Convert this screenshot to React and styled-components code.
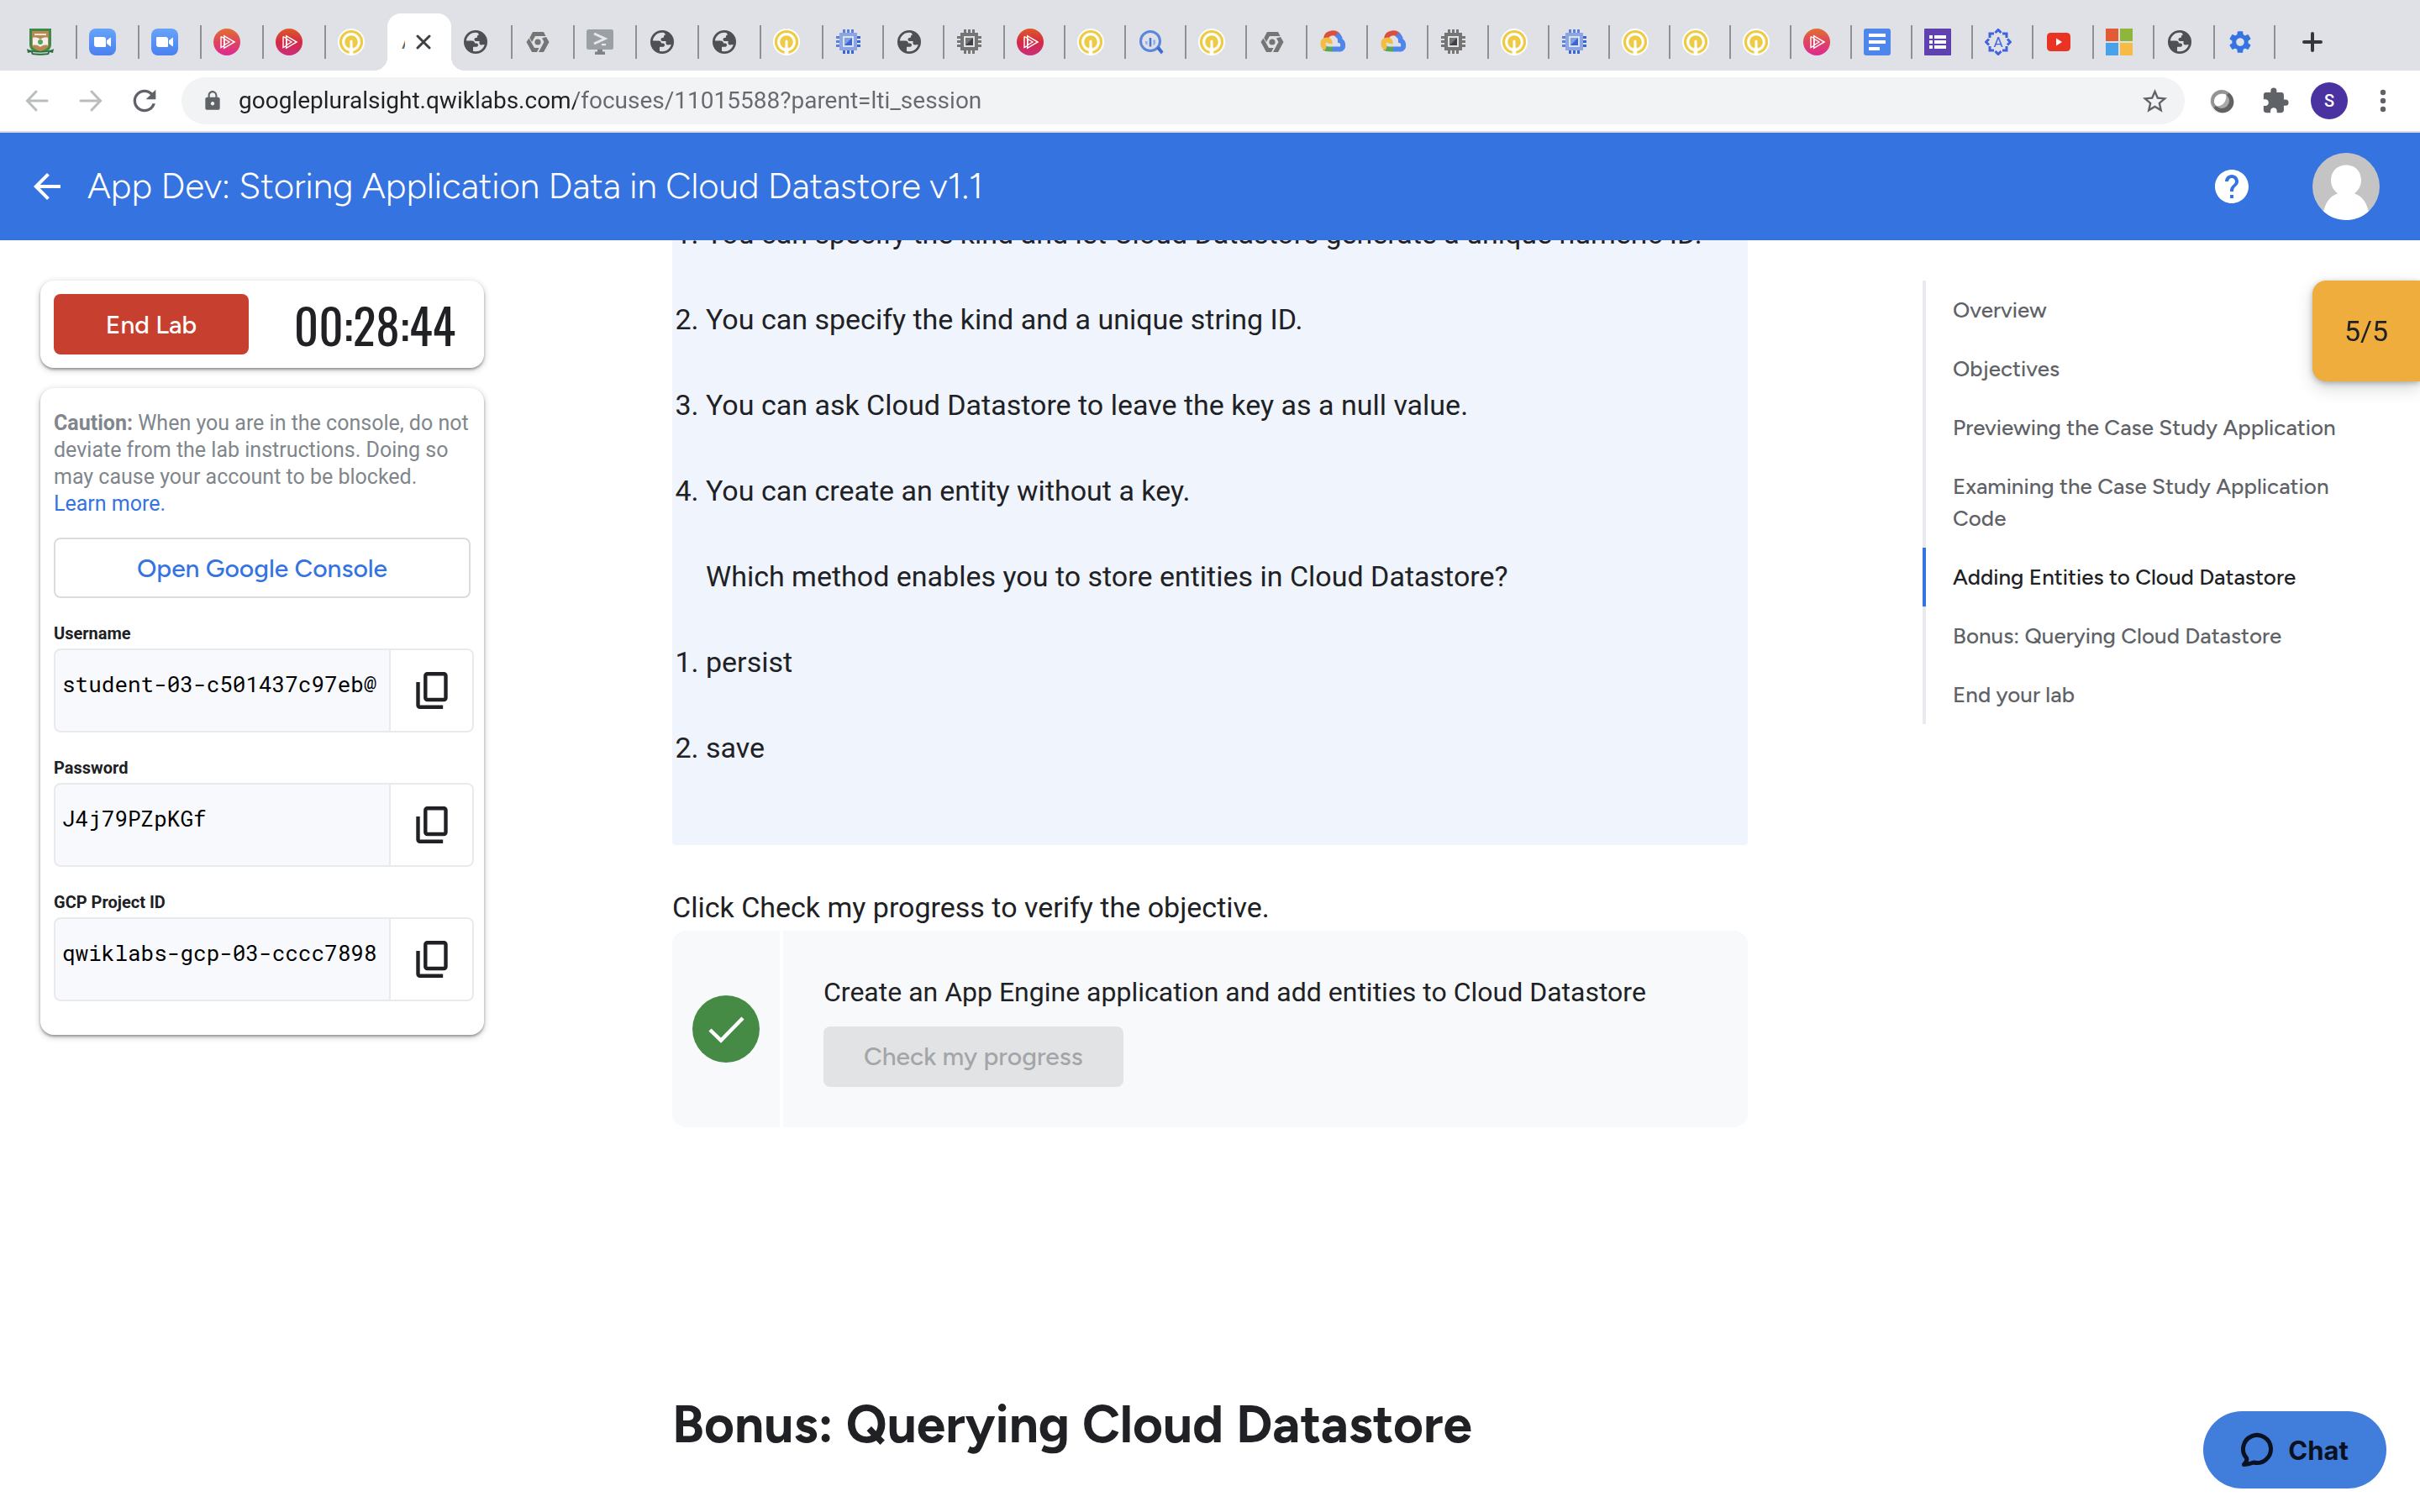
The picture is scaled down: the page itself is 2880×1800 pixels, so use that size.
import React from 'react';
import styled, { createGlobalStyle, css } from 'styled-components';
import {
  MdArrowBack,
  MdExtension,
  MdHelp,
  MdLock,
  MdRefresh,
  MdSettings,
  MdStarBorder,
} from 'react-icons/md';

const fonts = {
  body: 'Roboto, "Open Sans", sans-serif',
  display: 'Figtree, Roboto, sans-serif',
  mono: '"Roboto Mono", "DejaVu Sans Mono", monospace',
  timer: 'Oswald, "Roboto Condensed", Roboto, sans-serif',
  chat: 'Inter, Roboto, sans-serif',
};

const colors = {
  ink: '#202124',
  grey: '#5f6368',
  line: '#e8eaed',
  blue: '#3574e0',
  strip: '#dfe1e6',
};

const GlobalStyle = createGlobalStyle`
  *, *::before, *::after { box-sizing: border-box; }
  body {
    margin: 0;
    background: #fff;
    color: ${colors.ink};
    font-family: ${fonts.body};
  }
  button, input { font: inherit; color: inherit; }
  button { border: 0; padding: 0; background: none; cursor: pointer; }
  svg { display: block; flex: none; }
`;

/* ---------- Favicons ---------- */

const Icon32 = ({ children }) => (
  <svg width="32" height="32" viewBox="0 0 32 32" aria-hidden="true">
    {children}
  </svg>
);

const CrestIcon = () => (
  <Icon32>
    <path d="M3 0h26v19c0 6-5 9-13 12C8 28 3 25 3 19z" fill="#3d8a4c" />
    <path d="M6 3h20v16c0 4-4 6-10 8-6-2-10-4-10-8z" fill="#b98a50" />
    <path d="M9 6h14v2H9z" fill="#efe3cf" />
    <path d="M7 11c4-1 7 0 9 2 2-2 5-3 9-2v9c-4-1-7 0-9 2-2-2-5-3-9-2z" fill="#f6f1ee" />
    <circle cx="16" cy="16" r="3" fill="#4fa862" />
    <path d="M0 24c5 4 27 4 32 0l-1 5-4-1-1 3c-6 1-14 1-20 0l-1-3-4 1z" fill="#2c6b3c" />
    <path d="M7 28.500c6 1 12 1 18 0" stroke="#b9d3b9" strokeWidth="1.500" fill="none" />
  </Icon32>
);

const ZoomIcon = () => (
  <Icon32>
    <defs>
      <linearGradient id="zoomFill" x1="0" y1="0" x2="0" y2="1">
        <stop offset="0" stopColor="#66a3f8" />
        <stop offset="1" stopColor="#4a80f0" />
      </linearGradient>
    </defs>
    <rect width="32" height="32" rx="8" fill="url(#zoomFill)" />
    <path d="M6 11.500c0-1 .5-1.500 1.500-1.500H17c2 0 3 1 3 3v7.500c0 1-.5 1.500-1.500 1.500H9c-2 0-3-1-3-3z" fill="#fff" />
    <path d="M21 14.200l4-3.200c.6-.5 1-.3 1 .4v9.200c0 .7-.4.900-1 .4l-4-3.200z" fill="#fff" />
  </Icon32>
);

const PluralsightIcon = ({ deep }) => (
  <Icon32>
    <defs>
      <linearGradient id={deep ? 'psDeep' : 'psWarm'} x1="0" y1="0" x2="0" y2="1">
        <stop offset="0" stopColor={deep ? '#dd5a26' : '#e2702f'} />
        <stop offset=".5" stopColor={deep ? '#d42a46' : '#de4460'} />
        <stop offset="1" stopColor={deep ? '#ca2e7c' : '#dc2a94'} />
      </linearGradient>
    </defs>
    <circle cx="16" cy="16" r="16" fill={`url(#${deep ? 'psDeep' : 'psWarm'})`} />
    <path d="M9 9.500v13l4-2.200M9 9.500l4 2.200" fill="none" stroke="#fff" strokeWidth="1.400" />
    <path d="M12.700 8.700v14.600L25 16z" fill="none" stroke="#fff" strokeWidth="1.500" />
    <path d="M13 12.500v7l6-3.500z" fill="none" stroke="#fff" strokeWidth="1.300" />
  </Icon32>
);

const QwiklabsIcon = () => (
  <Icon32>
    <circle cx="16" cy="16" r="16" fill="#fff" />
    <circle cx="16" cy="16" r="12.500" fill="none" stroke="#efcb45" strokeWidth="3.200" />
    <circle cx="16" cy="16" r="7.800" fill="#efcb45" />
    <path d="M16 15v16" stroke="#fff" strokeWidth="3" strokeLinecap="round" />
    <path d="M14.200 22.500v8M17.800 22.500v8" stroke="#fff" strokeWidth="1.200" />
  </Icon32>
);

const GlobeIcon = () => (
  <Icon32>
    <g fill="#4e5054">
      <circle cx="16" cy="16" r="12.600" fill="none" stroke="#4e5054" strokeWidth="2.800" />
      <path d="M17 2.500C24 3 29 8 29.500 15l-2 4-5 .5c-1.500 0-2-1-2-2.200V15h-4c-1.200 0-2-.8-2-2 0-1.500 1-2 2.200-2 1 0 1.300-.6 1.300-1.500 0-1.300.9-1.700 2-1.900z" />
      <path d="M2.500 14.500h9c2.500 0 3.500 1.500 3.500 3h2c1.500 0 2 1 2 2 0 1.600-1 2.300-2.500 2.300H14c-.8 0-1 .5-1 1.200V27l-2 1C6 26 2.500 21 2.500 16z" />
    </g>
  </Icon32>
);

const HexIcon = () => (
  <Icon32>
    <g fill="#757575">
      <path d="M10 4h13l2.500 5H13l-4 7-2.700-5z" />
      <path d="M26 10l3.500 6-6.500 12h-6l6.500-12-2.500-4.500z" />
      <path d="M5.500 11.500L2.500 16 9 28h6l2.500-5H12z" />
      <circle cx="16" cy="16" r="3.600" />
    </g>
  </Icon32>
);

const ShellIcon = () => (
  <Icon32>
    <rect y="1" width="32" height="24" rx="2.500" fill="#9aa0a6" />
    <path d="M9 6l13 6-13 6" fill="none" stroke="#e6e8ec" strokeWidth="3" />
    <path d="M18 18h5v2.200h-5z" fill="#e6e8ec" />
    <path d="M13 25h6v2.500h3V31H10v-3.500h3z" fill="#7f8388" />
  </Icon32>
);

const ChipIcon = ({ grey }) => {
  const frame = grey ? '#757575' : '#8ba6e6';
  const pin = grey ? '#757575' : '#5a82dc';
  const corner = grey ? '#757575' : '#3b66cf';
  return (
    <Icon32>
      <path d="M9 1h3v4H9zM14 1h3v4h-3zM19 1h3v4h-3zM1 9h4v3H1zM1 14h4v3H1zM1 19h4v3H1z" fill={pin} />
      <path d="M9 26h3v4H9zM14 26h3v4h-3zM19 26h3v4h-3zM26 9h4v3h-4zM26 14h4v3h-4zM26 19h4v3h-4z" fill={corner} />
      <path fillRule="evenodd" d="M5 5h21v21H5zM9 9v13h13V9z" fill={frame} />
      <path d="M11 11h9v9h-9z" fill={grey ? '#757575' : '#7f9fe6'} />
      <path d="M20 11v9h-9z" fill={grey ? '#3f4043' : '#3b66cf'} />
    </Icon32>
  );
};

const BigQueryIcon = () => (
  <Icon32>
    <circle cx="15" cy="15" r="11.500" fill="none" stroke="#5c86dc" strokeWidth="3" />
    <path d="M22.500 24l3-3 5 6.500-2.500 3z" fill="#3f6bd0" />
    <path d="M9 15h2.500v5L9 18zM18.500 13.500H21V18l-2.500 2.500z" fill="#8fadea" />
    <path d="M13.700 11h2.600v10.500h-2.600z" fill="#4c78d8" />
  </Icon32>
);

const CloudIcon = () => (
  <Icon32>
    <g fill="none" strokeWidth="6">
      <path d="M8 12C9 3.500 20 4 23 9" stroke="#d9503f" />
      <path d="M20.500 7C24 9 25 12 25 14.500c4.500 1.500 4 10 0 10H16" stroke="#4f86ec" />
      <path d="M6 23.200c2 1.500 4 1.300 10 1.300" stroke="#57a55a" />
      <path d="M8 23c-5-2-4.500-9 .5-9.500C12 13 13 15.500 12.500 18" stroke="#f4bc42" />
    </g>
  </Icon32>
);

const DocsIcon = () => (
  <Icon32>
    <rect width="32" height="32" rx="3" fill="#4e86ec" />
    <path d="M6 6h20v4H6zM6 14h20v4H6zM6 22h13v4H6z" fill="#fff" />
  </Icon32>
);

const FormsIcon = () => (
  <Icon32>
    <rect width="32" height="32" rx="1" fill="#5f41b0" />
    <path d="M6 8h4v4H6zM12 8h14v4H12zM6 14h4v4H6zM12 14h14v4H12zM6 20h4v4H6zM12 20h14v4H12z" fill="#fff" />
  </Icon32>
);

const SvgLetter = styled.text`
  font: 400 17px ${fonts.body};
  text-anchor: middle;
`;

const BadgeIcon = () => (
  <Icon32>
    <g fill="none" stroke="#3f63e0" strokeWidth="3">
      <path d="M12.500 5L16 1.500 19.500 5M12.500 27l3.500 3.500 3.500-3.500M5 12.500L1.500 16 5 19.500M27 12.500l3.500 3.500-3.500 3.500" />
      <path d="M6 11V6h5M21 6h5v5M26 21v5h-5M11 26H6v-5" />
    </g>
    <SvgLetter x="16" y="22" fill="#3f63e0">A</SvgLetter>
  </Icon32>
);

const YouTubeIcon = () => (
  <Icon32>
    <rect x="2" y="5" width="28" height="22" rx="4.500" fill="#ea3323" />
    <path d="M13 11.500v9l7-4.500z" fill="#fff" />
  </Icon32>
);

const MicrosoftIcon = () => (
  <Icon32>
    <path d="M0 0h15v15H0z" fill="#e35b35" />
    <path d="M17 0h15v15H17z" fill="#8db63a" />
    <path d="M0 17h15v15H0z" fill="#48a2ea" />
    <path d="M17 17h15v15H17z" fill="#f5bb42" />
  </Icon32>
);

const favicons = {
  crest: <CrestIcon />,
  zoom: <ZoomIcon />,
  pluralsight: <PluralsightIcon />,
  pluralsightDeep: <PluralsightIcon deep />,
  qwiklabs: <QwiklabsIcon />,
  globe: <GlobeIcon />,
  hex: <HexIcon />,
  shell: <ShellIcon />,
  chip: <ChipIcon />,
  chipGrey: <ChipIcon grey />,
  bigquery: <BigQueryIcon />,
  cloud: <CloudIcon />,
  docs: <DocsIcon />,
  forms: <FormsIcon />,
  badge: <BadgeIcon />,
  youtube: <YouTubeIcon />,
  microsoft: <MicrosoftIcon />,
  settings: <MdSettings size={32} color={colors.blue} />,
};

const wideTabs = [
  'crest', 'zoom', 'zoom', 'pluralsight', 'pluralsightDeep', 'qwiklabs', 'active',
  'globe', 'hex', 'shell', 'globe', 'globe', 'qwiklabs',
];

const narrowTabs = [
  'chip', 'globe', 'chipGrey', 'pluralsightDeep', 'qwiklabs', 'bigquery', 'qwiklabs', 'hex',
  'cloud', 'cloud', 'chipGrey', 'qwiklabs', 'chip', 'qwiklabs', 'qwiklabs', 'qwiklabs',
  'pluralsight', 'docs', 'forms', 'badge', 'youtube', 'microsoft', 'globe', 'settings',
];

/* ---------- Browser chrome ---------- */

const TabStrip = styled.div`
  display: flex;
  height: 84px;
  padding: 16px 18px 0;
  background: ${colors.strip};
`;

const Tab = styled.button`
  display: flex;
  flex: none;
  align-items: center;
  justify-content: space-between;
  width: ${(p) => (p.$wide ? 74 : 72)}px;
  padding-left: 14px;
`;

const TabDivider = styled.span`
  width: 2px;
  height: 40px;
  background: #8f9094;
`;

const foot = css`
  content: '';
  position: absolute;
  bottom: 0;
  width: 16px;
  height: 16px;
`;

const ActiveTab = styled.div`
  position: relative;
  display: flex;
  flex: none;
  align-items: center;
  gap: 10px;
  width: 76px;
  margin: 0 -1px;
  padding-left: 17px;
  border-radius: 16px 16px 0 0;
  background: #fff;

  &::before {
    ${foot}
    right: 100%;
    background: radial-gradient(circle at 0 0, transparent 16px, #fff 16px);
  }

  &::after {
    ${foot}
    left: 100%;
    background: radial-gradient(circle at 100% 0, transparent 16px, #fff 16px);
  }
`;

const TabTitle = styled.span`
  width: 4px;
  overflow: hidden;
  font-size: 24px;
  line-height: 32px;
  color: ${colors.grey};
`;

const CloseButton = styled.button`
  display: grid;
  place-items: center;
  width: 24px;
  height: 24px;
`;

const NewTabButton = styled.button`
  display: grid;
  place-items: center;
  width: 48px;
  margin-left: 20px;
`;

const Toolbar = styled.div`
  display: flex;
  align-items: center;
  gap: 24px;
  height: 74px;
  padding: 0 24px;
  border-bottom: 2px solid #d9dbdf;
  background: #fff;
`;

const ToolButton = styled.button`
  display: grid;
  flex: none;
  place-items: center;
  width: 40px;
  height: 40px;
  color: ${(p) => (p.disabled ? '#babcbe' : colors.grey)};
`;

const Omnibox = styled.div`
  display: flex;
  flex: 1;
  align-items: center;
  gap: 18px;
  height: 56px;
  padding: 0 16px 0 24px;
  border-radius: 28px;
  background: #f1f3f4;
  color: ${colors.grey};
`;

const AddressInput = styled.input`
  flex: 1;
  min-width: 0;
  padding: 0;
  border: 0;
  outline: 0;
  background: linear-gradient(90deg, ${colors.ink} 401px, #66696d 401px);
  background-clip: text;
  -webkit-text-fill-color: transparent;
  font-size: 28px;
  line-height: 40px;
`;

const ProfileBadge = styled.button`
  display: grid;
  flex: none;
  place-items: center;
  width: 44px;
  height: 44px;
  margin: 0 -2px;
  border-radius: 50%;
  background: #4a33a0;
  color: #fff;
  font-size: 20px;
  font-weight: 500;
`;

const BrowserChrome = () => (
  <>
    <TabStrip>
      {wideTabs.map((name, i) =>
        name === 'active' ? (
          <ActiveTab key={i}>
            <TabTitle>A</TabTitle>
            <CloseButton aria-label="Close tab">
              <svg width="18" height="18" viewBox="0 0 18 18" stroke="#3c4043" strokeWidth="3" strokeLinecap="round">
                <path d="M2 2l14 14M16 2L2 16" />
              </svg>
            </CloseButton>
          </ActiveTab>
        ) : (
          <Tab key={i} $wide aria-label={name}>
            {favicons[name]}
            {wideTabs[i + 1] !== 'active' && <TabDivider />}
          </Tab>
        ),
      )}
      {narrowTabs.map((name, i) => (
        <Tab key={i} aria-label={name}>
          {favicons[name]}
          <TabDivider />
        </Tab>
      ))}
      <NewTabButton aria-label="New tab">
        <svg width="24" height="24" viewBox="0 0 24 24" stroke="#35373a" strokeWidth="4" strokeLinecap="round">
          <path d="M12 2v20M2 12h20" />
        </svg>
      </NewTabButton>
    </TabStrip>
    <Toolbar>
      <ToolButton disabled aria-label="Back">
        <svg width="28" height="28" viewBox="0 0 28 28" fill="none" stroke="currentColor" strokeWidth="3" strokeLinecap="round">
          <path d="M26 14H3M13 3L2.500 14 13 25" />
        </svg>
      </ToolButton>
      <ToolButton disabled aria-label="Forward">
        <svg width="28" height="28" viewBox="0 0 28 28" fill="none" stroke="currentColor" strokeWidth="3" strokeLinecap="round">
          <path d="M2 14h23M15 3l10.500 11L15 25" />
        </svg>
      </ToolButton>
      <ToolButton aria-label="Reload">
        <MdRefresh size={40} />
      </ToolButton>
      <Omnibox>
        <MdLock size={26} />
        <AddressInput
          aria-label="Address"
          readOnly
          value="googlepluralsight.qwiklabs.com/focuses/11015588?parent=lti_session"
        />
        <ToolButton aria-label="Bookmark">
          <MdStarBorder size={35} />
        </ToolButton>
      </Omnibox>
      <ToolButton aria-label="Extension">
        <svg width="32" height="32" viewBox="0 0 32 32">
          <circle cx="16" cy="17" r="14" fill="#ececec" />
          <circle cx="16" cy="16" r="13" fill="#949494" />
          <path d="M24.500 6.500A13 13 0 1 1 6.500 24.500z" fill="#626262" />
          <circle cx="16" cy="16" r="9" fill="#a9a9a9" />
          <path d="M7 18C6 11 13 6 21 8.500 23 16 16 24 9.500 22A9 9 0 0 1 7 18z" fill="#fff" />
        </svg>
      </ToolButton>
      <ToolButton aria-label="Extensions">
        <MdExtension size={34} />
      </ToolButton>
      <ProfileBadge>S</ProfileBadge>
      <ToolButton aria-label="Menu">
        <svg width="8" height="28" viewBox="0 0 8 28" fill="currentColor">
          <circle cx="4" cy="4" r="3.200" />
          <circle cx="4" cy="14" r="3.200" />
          <circle cx="4" cy="24" r="3.200" />
        </svg>
      </ToolButton>
    </Toolbar>
  </>
);

/* ---------- Lab header ---------- */

const Header = styled.header`
  display: flex;
  align-items: center;
  gap: 24px;
  height: 128px;
  padding: 0 48px 0 32px;
  background: ${colors.blue};
  color: #fff;
`;

const HeaderTitle = styled.h1`
  flex: 1;
  margin: 0;
  font-family: ${fonts.display};
  font-size: 42px;
  font-weight: 350;
  line-height: 56px;
`;

const HeaderActions = styled.div`
  display: flex;
  align-items: center;
  gap: 72px;
`;

const LabHeader = () => (
  <Header>
    <button aria-label="Back to labs">
      <MdArrowBack size={48} />
    </button>
    <HeaderTitle>App Dev: Storing Application Data in Cloud Datastore v1.1</HeaderTitle>
    <HeaderActions>
      <button aria-label="Help">
        <MdHelp size={48} />
      </button>
      <button aria-label="Account">
        <svg width="80" height="80" viewBox="0 0 80 80">
          <defs>
            <clipPath id="avatarClip">
              <circle cx="40" cy="40" r="40" />
            </clipPath>
          </defs>
          <g clipPath="url(#avatarClip)">
            <path d="M0 0h80v80H0z" fill="#c4c4c4" />
            <path d="M40 14.500c11 0 18 8 18 18C58 40 54 45 50 48.500c10 3 16.500 12 18.500 31.500h-57C13.500 60.500 20 51.500 30 48.500 26 45 22 40 22 32.500c0-10 7-18 18-18z" fill="#fff" />
          </g>
        </svg>
      </button>
    </HeaderActions>
  </Header>
);

/* ---------- Credentials panel ---------- */

const Main = styled.main`
  display: grid;
  flex: 1;
  grid-template-columns: 544px minmax(0, 1fr) 544px;
  gap: 208px;
  align-items: start;
  padding: 0 48px;
  overflow: hidden;
`;

const Sidebar = styled.aside`
  display: flex;
  flex-direction: column;
  gap: 24px;
  padding: 48px 16px 24px 0;
`;

const Card = styled.section`
  padding: ${(p) => (p.$tall ? '26px 16px 40px' : '16px')};
  border-radius: 16px;
  background: #fff;
  box-shadow: 0 2px 3px rgba(0, 0, 0, 0.32), 0 3px 8px rgba(0, 0, 0, 0.16), 0 0 8px rgba(0, 0, 0, 0.06);
`;

const TimerCard = styled(Card)`
  display: flex;
  align-items: center;
  justify-content: space-between;
  padding-right: 34px;
`;

const Button = styled.button`
  height: 72px;
  border-radius: 8px;
  font-family: ${fonts.display};
  font-size: 30px;
  font-weight: 500;
`;

const EndButton = styled(Button)`
  width: 232px;
  background: #c7402f;
  color: #fff;
`;

const ConsoleButton = styled(Button)`
  width: 100%;
  margin-top: 24px;
  border: 2px solid #dadce0;
  background: #fff;
  color: ${colors.blue};
`;

const Timer = styled.time`
  font-family: ${fonts.timer};
  font-size: 57px;
  font-weight: 400;
  line-height: 72px;
`;

const Caution = styled.p`
  margin: 0;
  color: #80868b;
  font-size: 25px;
  line-height: 32px;
`;

const LearnMore = styled.a`
  display: block;
  color: ${colors.blue};
  text-decoration: none;
`;

const Field = styled.div`
  display: flex;
  flex-direction: column;
  gap: 6px;
  margin: 30px -4px 0 0;
`;

const FieldLabel = styled.label`
  font-size: 20px;
  font-weight: 700;
  line-height: 24px;
`;

const FieldBox = styled.div`
  display: flex;
  height: 100px;
  overflow: hidden;
  border: 2px solid ${colors.line};
  border-radius: 8px;
  background: #f8f9fc;
`;

const FieldInput = styled.input`
  flex: 1;
  min-width: 0;
  padding: 0 8px 16px;
  border: 0;
  outline: 0;
  background: none;
  color: #000;
  font-family: ${fonts.mono};
  font-size: 26px;
`;

const CopyButton = styled.button`
  display: grid;
  place-items: center;
  width: 99px;
  border-left: 2px solid ${colors.line};
  background: #fff;
`;

const credentials = [
  { id: 'username', label: 'Username', value: 'student-03-c501437c97eb@' },
  { id: 'password', label: 'Password', value: 'J4j79PZpKGf' },
  { id: 'project', label: 'GCP Project ID', value: 'qwiklabs-gcp-03-cccc7898' },
];

const CredentialsPanel = () => (
  <Sidebar>
    <TimerCard>
      <EndButton>End Lab</EndButton>
      <Timer>00:28:44</Timer>
    </TimerCard>
    <Card $tall>
      <Caution>
        <strong>Caution:</strong> When you are in the console, do not deviate from the lab
        instructions. Doing so may cause your account to be blocked.
        <LearnMore href="#learn-more">Learn more.</LearnMore>
      </Caution>
      <ConsoleButton>Open Google Console</ConsoleButton>
      {credentials.map(({ id, label, value }) => (
        <Field key={id}>
          <FieldLabel htmlFor={id}>{label}</FieldLabel>
          <FieldBox>
            <FieldInput id={id} readOnly value={value} />
            <CopyButton aria-label={`Copy ${label}`}>
              <svg width="38" height="44" viewBox="3 2 17 20" fill={colors.ink}>
                <path d="M9 18q-.825 0-1.412-.587T7 16V4q0-.825.588-1.412T9 2h9q.825 0 1.413.588T20 4v12q0 .825-.587 1.413T18 18H9Zm0-2h9V4H9v12Zm-4 6q-.825 0-1.412-.587T3 20V7.500h2V20h12.500v2H5Z" />
              </svg>
            </CopyButton>
          </FieldBox>
        </Field>
      ))}
    </Card>
  </Sidebar>
);

/* ---------- Lab instructions ---------- */

const Article = styled.article`
  margin-top: -34px;
  font-size: 34px;
  line-height: 52px;
`;

const Quiz = styled.div`
  padding-bottom: 40px;
  border-radius: 0 0 4px 4px;
  background: #f0f4fd;
`;

const Answers = styled.ol`
  margin: 0;
  padding: 0 0 0 40px;
`;

const Answer = styled.li`
  padding-bottom: 50px;
`;

const Question = styled.p`
  margin: 50px 0 0;
`;

const Instruction = styled.p`
  margin: 48px 0 2px;
`;

const Checkpoint = styled.section`
  display: flex;
  overflow: hidden;
  border-radius: 16px;
  background: #f8f9fb;
`;

const CheckpointStatus = styled.div`
  display: grid;
  place-items: center;
  width: 132px;
  border-right: 4px solid #fff;
`;

const CheckpointBody = styled.div`
  display: flex;
  flex-direction: column;
  align-items: flex-start;
  gap: 16px;
  padding: 48px;
`;

const CheckpointTitle = styled.p`
  margin: 0;
  font-size: 32px;
  line-height: 50px;
`;

const ProgressButton = styled(Button)`
  padding: 0 48px;
  background: #e2e3e5;
  color: #a3a5a8;
  cursor: default;
`;

const SectionHeading = styled.h2`
  margin: 316px 0 0;
  font-family: ${fonts.display};
  font-size: 62px;
  font-weight: 700;
  line-height: 76px;
`;

const Instructions = () => (
  <Article>
    <Quiz>
      <Answers>
        <Answer>You can specify the kind and let Cloud Datastore generate a unique numeric ID.</Answer>
        <Answer>You can specify the kind and a unique string ID.</Answer>
        <Answer>You can ask Cloud Datastore to leave the key as a null value.</Answer>
        <Answer>
          You can create an entity without a key.
          <Question>Which method enables you to store entities in Cloud Datastore?</Question>
        </Answer>
      </Answers>
      <Answers>
        <Answer>persist</Answer>
        <Answer>save</Answer>
      </Answers>
    </Quiz>
    <Instruction>Click Check my progress to verify the objective.</Instruction>
    <Checkpoint>
      <CheckpointStatus>
        <svg width="80" height="80" viewBox="0 0 80 80" aria-label="Completed">
          <circle cx="40" cy="40" r="40" fill="#458b46" />
          <path d="M21 41l13 12.500L60 27" fill="none" stroke="#fff" strokeWidth="4.500" />
        </svg>
      </CheckpointStatus>
      <CheckpointBody>
        <CheckpointTitle>
          Create an App Engine application and add entities to Cloud Datastore
        </CheckpointTitle>
        <ProgressButton disabled>Check my progress</ProgressButton>
      </CheckpointBody>
    </Checkpoint>
    <SectionHeading>Bonus: Querying Cloud Datastore</SectionHeading>
  </Article>
);

/* ---------- Outline ---------- */

const Outline = styled.nav`
  padding-top: 48px;
`;

const OutlineList = styled.ul`
  margin: 0;
  padding: 0;
  list-style: none;
`;

const OutlineLink = styled.a`
  display: block;
  padding: 16px 48px 16px 32px;
  border-left: 4px solid ${(p) => (p.$current ? colors.blue : colors.line)};
  color: ${(p) => (p.$current ? colors.ink : colors.grey)};
  font-family: ${fonts.display};
  font-size: 26px;
  font-weight: 500;
  line-height: 38px;
  text-decoration: none;
`;

const sections = [
  'Overview',
  'Objectives',
  'Previewing the Case Study Application',
  'Examining the Case Study Application Code',
  'Adding Entities to Cloud Datastore',
  'Bonus: Querying Cloud Datastore',
  'End your lab',
];

const currentSection = 4;

const LabOutline = () => (
  <Outline aria-label="Lab sections">
    <OutlineList>
      {sections.map((title, i) => (
        <li key={title}>
          <OutlineLink href={`#step${i + 1}`} $current={i === currentSection}>
            {title}
          </OutlineLink>
        </li>
      ))}
    </OutlineList>
  </Outline>
);

/* ---------- Floating controls ---------- */

const Page = styled.div`
  position: relative;
  display: flex;
  flex-direction: column;
  min-height: 100vh;
`;

const ScoreBadge = styled.div`
  position: fixed;
  top: 334px;
  right: 0;
  display: grid;
  place-items: center;
  width: 128px;
  height: 120px;
  border-radius: 16px 0 0 16px;
  background: #efad3d;
  box-shadow: 0 2px 6px rgba(60, 64, 67, 0.35), 0 8px 20px rgba(60, 64, 67, 0.2);
  font-size: 34px;
`;

const ChatButton = styled.button`
  position: fixed;
  right: 40px;
  bottom: 28px;
  display: flex;
  align-items: center;
  justify-content: center;
  gap: 16px;
  width: 218px;
  height: 92px;
  border-radius: 46px;
  background: #417dda;
  color: #0a1222;
  font-family: ${fonts.chat};
  font-size: 31px;
  font-weight: 700;
`;

export default function App() {
  return (
    <>
      <GlobalStyle />
      <Page>
        <BrowserChrome />
        <LabHeader />
        <Main>
          <CredentialsPanel />
          <Instructions />
          <LabOutline />
        </Main>
        <ScoreBadge>5/5</ScoreBadge>
        <ChatButton>
          <svg width="40" height="42" viewBox="0 0 40 42" fill="none" stroke="currentColor" strokeWidth="5" strokeLinecap="round" strokeLinejoin="round">
            <path d="M3.500 38.500c2-2 4-4 3.200-7.500A16.500 16.500 0 1 1 15 36c-4 1.500-7 2.500-11.500 2.500z" />
          </svg>
          Chat
        </ChatButton>
      </Page>
    </>
  );
}
